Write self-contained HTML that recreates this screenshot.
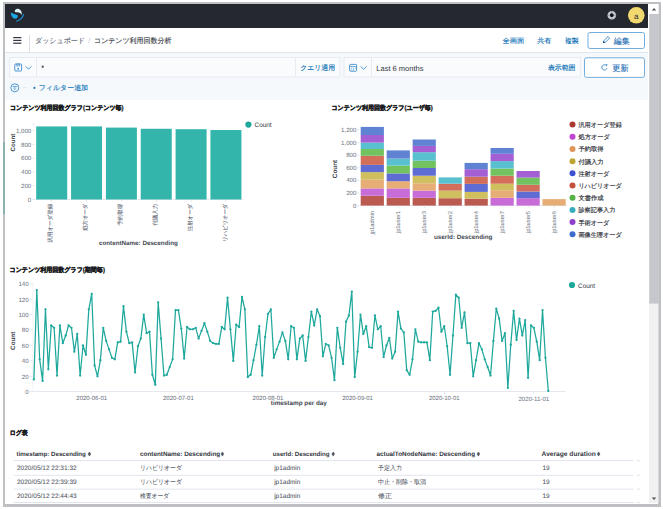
<!DOCTYPE html>
<html><head><meta charset="utf-8"><style>
html,body{margin:0;padding:0;width:663px;height:509px;overflow:hidden;background:#fff;}
svg{display:block;font-family:"Liberation Sans", sans-serif;text-rendering:geometricPrecision;}
</style></head><body>
<svg width="663" height="509" viewBox="0 0 663 509">
<rect x="0" y="0" width="663" height="509" fill="#ffffff"/>
<rect x="3" y="2" width="658" height="505" fill="#bfc0c3"/>
<rect x="5" y="4" width="653" height="500" fill="#ffffff"/>
<rect x="3" y="142" width="2" height="72" fill="#8fb0b0"/>
<rect x="5" y="4" width="643" height="24" fill="#25282f"/>
<path d="M14.8,11.8 C14.5,9.5 16.5,8.6 18,8.8 C20.5,9.2 22.2,11.5 21.7,14.9 C20.8,13.2 19.2,12.4 17.4,12.3 C16.2,12.2 15.2,12.3 14.8,11.8 Z" fill="#dcf3f7"/><path d="M10.8,12.4 C12.5,13.8 15.5,14 17.6,15.3 C18.3,16.6 17.5,18.7 15.5,18.7 C12.5,18.5 10.8,15.5 10.8,12.4 Z" fill="#1aa8e6"/><path d="M16.2,21.2 C19.5,20.5 22.8,17.8 23.7,14" stroke="#1b8fd6" stroke-width="1.1" fill="none"/>
<circle cx="611.8" cy="15.2" r="3.1" fill="#1a1c21" stroke="#c9cdd3" stroke-width="2.4"/>
<path d="M611.8,10.7 v2.2 M611.8,17.5 v2.2 M607.3,15.2 h2.2 M614.1,15.2 h2.2" stroke="#7d8590" stroke-width="0.8"/><circle cx="611.8" cy="15.2" r="1.4" fill="#111317"/>
<circle cx="636.3" cy="15.3" r="8.3" fill="#f1d86f"/>
<text x="636.30" y="16.40" font-size="8" fill="#25282f" font-weight="normal" text-anchor="middle" dominant-baseline="central">a</text>
<rect x="649" y="4" width="9.5" height="499" fill="#f1f1f1"/>
<rect x="649" y="4" width="9.5" height="10" fill="#ffffff"/>
<path d="M651.8,10.5 L654,8 L656.2,10.5 Z" fill="#505050"/>
<rect x="649.3" y="14" width="9.5" height="289.6" fill="#c5c7cc"/>
<path d="M651.8,497.5 L654,500 L656.2,497.5 Z" fill="#505050"/>
<rect x="5" y="52.3" width="643" height="0.9" fill="#d3dae6"/>
<rect x="13.2" y="37.0" width="8.2" height="1.2" fill="#343741"/>
<rect x="13.2" y="39.8" width="8.2" height="1.2" fill="#343741"/>
<rect x="13.2" y="42.6" width="8.2" height="1.2" fill="#343741"/>
<rect x="29" y="35" width="0.8" height="17.3" fill="#d3dae6"/>
<text x="35.00" y="41.10" font-size="7.1" fill="#69707d" font-weight="normal" text-anchor="start" dominant-baseline="central" stroke="#69707d" stroke-width="0.12" textLength="50" lengthAdjust="spacingAndGlyphs">ダッシュボード</text>
<text x="89.30" y="41.10" font-size="7.1" fill="#c5c9d0" font-weight="normal" text-anchor="middle" dominant-baseline="central">/</text>
<text x="94.00" y="41.10" font-size="7.1" fill="#343741" font-weight="normal" text-anchor="start" dominant-baseline="central" stroke="#343741" stroke-width="0.12" textLength="77.4" lengthAdjust="spacingAndGlyphs">コンテンツ利用回数分析</text>
<text x="502.40" y="41.30" font-size="6.8" fill="#006bb4" font-weight="normal" text-anchor="start" dominant-baseline="central" stroke="#006bb4" stroke-width="0.12" textLength="21.8" lengthAdjust="spacingAndGlyphs">全画面</text>
<text x="537.30" y="41.30" font-size="6.8" fill="#006bb4" font-weight="normal" text-anchor="start" dominant-baseline="central" stroke="#006bb4" stroke-width="0.12" textLength="14" lengthAdjust="spacingAndGlyphs">共有</text>
<text x="564.90" y="41.30" font-size="6.8" fill="#006bb4" font-weight="normal" text-anchor="start" dominant-baseline="central" stroke="#006bb4" stroke-width="0.12" textLength="13.8" lengthAdjust="spacingAndGlyphs">複製</text>
<rect x="588" y="32.5" width="56.5" height="16" rx="2" fill="#ffffff" stroke="#5b9fd6" stroke-width="0.85"/>
<path d="M603.4,42.6 L603.9,40.6 L608,36.5 L609.6,38.1 L605.5,42.2 Z" fill="none" stroke="#2f7fc4" stroke-width="0.85" stroke-linejoin="round"/><path d="M602.8,43.3 L603.5,40.9 L605.3,42.6 Z" fill="#0d4a85"/>
<text x="613.80" y="41.40" font-size="8.2" fill="#1f6fb5" font-weight="normal" text-anchor="start" dominant-baseline="central" stroke="#1f6fb5" stroke-width="0.12" textLength="15.8" lengthAdjust="spacingAndGlyphs">編集</text>
<rect x="5" y="53.2" width="643" height="46.8" fill="#f6f9fb"/>
<rect x="9.5" y="57.5" width="330.5" height="19.5" fill="#f9fbfc" stroke="#e4e8ef" stroke-width="0.8"/>
<rect x="36" y="57.5" width="0.8" height="19.5" fill="#e4e8ef"/>
<rect x="295" y="57.5" width="0.8" height="19.5" fill="#e4e8ef"/>
<rect x="14.8" y="64" width="6.8" height="7" rx="0.8" fill="none" stroke="#3a8bd0" stroke-width="0.9"/>
<rect x="16.8" y="64" width="2.8" height="2" fill="none" stroke="#3a8bd0" stroke-width="0.7"/>
<rect x="17.4" y="68" width="1.6" height="1.6" fill="#3a8bd0"/>
<path d="M25.8,66.4 L28.6,69.2 L31.4,66.4" fill="none" stroke="#3a8bd0" stroke-width="0.9"/>
<path d="M42.7,65.4 L42.7,68 M41.5,66.1 L43.9,67.3 M43.9,66.1 L41.5,67.3" stroke="#343741" stroke-width="0.6"/>
<text x="300.20" y="68.30" font-size="6.9" fill="#006bb4" font-weight="normal" text-anchor="start" dominant-baseline="central" stroke="#006bb4" stroke-width="0.12" textLength="34.9" lengthAdjust="spacingAndGlyphs">クエリ適用</text>
<rect x="344" y="57.5" width="236.3" height="19.5" fill="#f9fbfc" stroke="#e4e8ef" stroke-width="0.8"/>
<rect x="371.2" y="57.5" width="0.8" height="19.5" fill="#e4e8ef"/>
<rect x="349.6" y="64.4" width="7" height="6.8" rx="0.8" fill="none" stroke="#3a8bd0" stroke-width="0.9"/>
<rect x="349.6" y="66.1" width="7" height="0.7" fill="#3a8bd0"/>
<path d="M351.2,68.2 h1 M353,68.2 h1 M354.8,68.2 h1 M351.2,69.8 h1 M353,69.8 h1" stroke="#3a8bd0" stroke-width="0.7"/>
<path d="M360.6,66.4 L363.6,69.3 L366.6,66.4" fill="none" stroke="#3a8bd0" stroke-width="0.9"/>
<text x="376.30" y="68.30" font-size="7.5" fill="#343741" font-weight="normal" text-anchor="start" dominant-baseline="central">Last 6 months</text>
<text x="547.90" y="68.20" font-size="6.9" fill="#006bb4" font-weight="normal" text-anchor="start" dominant-baseline="central" stroke="#006bb4" stroke-width="0.12" textLength="27.5" lengthAdjust="spacingAndGlyphs">表示範囲</text>
<rect x="584.5" y="57.8" width="60" height="19.6" rx="2" fill="#ffffff" stroke="#5b9fd6" stroke-width="0.85"/>
<path d="M606.3,65.6 A2.6,2.6 0 1 0 606.9,68.2" fill="none" stroke="#3a8bd0" stroke-width="0.9"/>
<path d="M605.4,64.1 L607.6,64.4 L606.9,66.6 Z" fill="#3a8bd0"/>
<text x="612.30" y="68.40" font-size="8.4" fill="#1f6fb5" font-weight="normal" text-anchor="start" dominant-baseline="central" stroke="#1f6fb5" stroke-width="0.12" textLength="16.3" lengthAdjust="spacingAndGlyphs">更新</text>
<circle cx="14.8" cy="87.8" r="4" fill="none" stroke="#3a8bd0" stroke-width="0.9"/>
<path d="M12.6,86.5 L17,86.5 M13.3,88 L16.3,88 M14.1,89.4 L15.5,89.4" stroke="#3a8bd0" stroke-width="0.7"/>
<rect x="22.9" y="87.5" width="3.6" height="0.6" fill="#d3dae6"/>
<path d="M33.2,87.9 L35.6,87.9 M34.4,86.7 L34.4,89.1" stroke="#006bb4" stroke-width="0.8"/>
<text x="38.70" y="88.70" font-size="7.0" fill="#006bb4" font-weight="normal" text-anchor="start" dominant-baseline="central" stroke="#006bb4" stroke-width="0.12" textLength="49.4" lengthAdjust="spacingAndGlyphs">フィルター追加</text>
<text x="9.90" y="108.30" font-size="6.6" fill="#1a1c21" font-weight="bold" text-anchor="start" dominant-baseline="central" stroke="#1a1c21" stroke-width="0.3" textLength="113.7" lengthAdjust="spacingAndGlyphs">コンテンツ利用回数グラフ(コンテンツ毎)</text>
<text x="31.20" y="200.20" font-size="6.1" fill="#69707d" font-weight="normal" text-anchor="end" dominant-baseline="central">0</text>
<rect x="32.3" y="199.20" width="2.4" height="0.6" fill="#d3dae6"/>
<text x="31.20" y="186.44" font-size="6.1" fill="#69707d" font-weight="normal" text-anchor="end" dominant-baseline="central">200</text>
<rect x="32.3" y="185.44" width="2.4" height="0.6" fill="#d3dae6"/>
<text x="31.20" y="172.68" font-size="6.1" fill="#69707d" font-weight="normal" text-anchor="end" dominant-baseline="central">400</text>
<rect x="32.3" y="171.68" width="2.4" height="0.6" fill="#d3dae6"/>
<text x="31.20" y="158.92" font-size="6.1" fill="#69707d" font-weight="normal" text-anchor="end" dominant-baseline="central">600</text>
<rect x="32.3" y="157.92" width="2.4" height="0.6" fill="#d3dae6"/>
<text x="31.20" y="145.16" font-size="6.1" fill="#69707d" font-weight="normal" text-anchor="end" dominant-baseline="central">800</text>
<rect x="32.3" y="144.16" width="2.4" height="0.6" fill="#d3dae6"/>
<text x="31.20" y="131.40" font-size="6.1" fill="#69707d" font-weight="normal" text-anchor="end" dominant-baseline="central">1,000</text>
<rect x="32.3" y="130.40" width="2.4" height="0.6" fill="#d3dae6"/>
<rect x="32.3" y="123.6" width="2.4" height="0.6" fill="#d3dae6"/>
<rect x="34.5" y="199.3" width="208.5" height="0.6" fill="#d3dae6"/>
<text transform="translate(13.50,142.50) rotate(-90)" font-size="6.2" fill="#40444e" font-weight="bold" text-anchor="middle" dominant-baseline="central">Count</text>
<rect x="36.20" y="126.43" width="31" height="73.07" fill="#34b5ab"/>
<rect x="51.40" y="199.5" width="0.6" height="2.5" fill="#d3dae6"/>
<text transform="translate(51.40,203.80) rotate(-90)" font-size="5.6" fill="#69707d" font-weight="normal" text-anchor="end" dominant-baseline="central" stroke="#69707d" stroke-width="0.12" textLength="38.7" lengthAdjust="spacingAndGlyphs">汎用オーダ登録</text>
<rect x="71.05" y="126.43" width="31" height="73.07" fill="#34b5ab"/>
<rect x="86.25" y="199.5" width="0.6" height="2.5" fill="#d3dae6"/>
<text transform="translate(86.25,203.80) rotate(-90)" font-size="5.6" fill="#69707d" font-weight="normal" text-anchor="end" dominant-baseline="central" stroke="#69707d" stroke-width="0.12" textLength="27" lengthAdjust="spacingAndGlyphs">処方オーダ</text>
<rect x="105.90" y="127.60" width="31" height="71.90" fill="#34b5ab"/>
<rect x="121.10" y="199.5" width="0.6" height="2.5" fill="#d3dae6"/>
<text transform="translate(121.10,203.80) rotate(-90)" font-size="5.6" fill="#69707d" font-weight="normal" text-anchor="end" dominant-baseline="central" stroke="#69707d" stroke-width="0.12" textLength="21.8" lengthAdjust="spacingAndGlyphs">予約取得</text>
<rect x="140.75" y="128.77" width="31" height="70.73" fill="#34b5ab"/>
<rect x="155.95" y="199.5" width="0.6" height="2.5" fill="#d3dae6"/>
<text transform="translate(155.95,203.80) rotate(-90)" font-size="5.6" fill="#69707d" font-weight="normal" text-anchor="end" dominant-baseline="central" stroke="#69707d" stroke-width="0.12" textLength="21.8" lengthAdjust="spacingAndGlyphs">付議入力</text>
<rect x="175.60" y="129.19" width="31" height="70.31" fill="#34b5ab"/>
<rect x="190.80" y="199.5" width="0.6" height="2.5" fill="#d3dae6"/>
<text transform="translate(190.80,203.80) rotate(-90)" font-size="5.6" fill="#69707d" font-weight="normal" text-anchor="end" dominant-baseline="central" stroke="#69707d" stroke-width="0.12" textLength="27.5" lengthAdjust="spacingAndGlyphs">注射オーダ</text>
<rect x="210.45" y="130.01" width="31" height="69.49" fill="#34b5ab"/>
<rect x="225.65" y="199.5" width="0.6" height="2.5" fill="#d3dae6"/>
<text transform="translate(225.65,203.80) rotate(-90)" font-size="5.6" fill="#69707d" font-weight="normal" text-anchor="end" dominant-baseline="central" stroke="#69707d" stroke-width="0.12" textLength="38" lengthAdjust="spacingAndGlyphs">リハビリオーダ</text>
<text x="99.00" y="243.80" font-size="6.26" fill="#454953" font-weight="bold" text-anchor="start" dominant-baseline="central">contentName: Descending</text>
<circle cx="248.4" cy="124.6" r="3.1" fill="#1ea89c"/>
<text x="254.50" y="125.60" font-size="6.41" fill="#343741" font-weight="normal" text-anchor="start" dominant-baseline="central">Count</text>
<text x="331.40" y="108.00" font-size="6.6" fill="#1a1c21" font-weight="bold" text-anchor="start" dominant-baseline="central" stroke="#1a1c21" stroke-width="0.3" textLength="101.4" lengthAdjust="spacingAndGlyphs">コンテンツ利用回数グラフ(ユーザ毎)</text>
<text x="356.30" y="206.10" font-size="6.1" fill="#69707d" font-weight="normal" text-anchor="end" dominant-baseline="central">0</text>
<rect x="357" y="205.30" width="2.4" height="0.6" fill="#d3dae6"/>
<text x="356.30" y="193.50" font-size="6.1" fill="#69707d" font-weight="normal" text-anchor="end" dominant-baseline="central">200</text>
<rect x="357" y="192.70" width="2.4" height="0.6" fill="#d3dae6"/>
<text x="356.30" y="180.90" font-size="6.1" fill="#69707d" font-weight="normal" text-anchor="end" dominant-baseline="central">400</text>
<rect x="357" y="180.10" width="2.4" height="0.6" fill="#d3dae6"/>
<text x="356.30" y="168.30" font-size="6.1" fill="#69707d" font-weight="normal" text-anchor="end" dominant-baseline="central">600</text>
<rect x="357" y="167.50" width="2.4" height="0.6" fill="#d3dae6"/>
<text x="356.30" y="155.70" font-size="6.1" fill="#69707d" font-weight="normal" text-anchor="end" dominant-baseline="central">800</text>
<rect x="357" y="154.90" width="2.4" height="0.6" fill="#d3dae6"/>
<text x="356.30" y="143.10" font-size="6.1" fill="#69707d" font-weight="normal" text-anchor="end" dominant-baseline="central">1,000</text>
<rect x="357" y="142.30" width="2.4" height="0.6" fill="#d3dae6"/>
<text x="356.30" y="130.50" font-size="6.1" fill="#69707d" font-weight="normal" text-anchor="end" dominant-baseline="central">1,200</text>
<rect x="357" y="129.70" width="2.4" height="0.6" fill="#d3dae6"/>
<text transform="translate(335.60,169.00) rotate(-90)" font-size="6.41" fill="#40444e" font-weight="bold" text-anchor="middle" dominant-baseline="central">Count</text>
<rect x="359.5" y="205.3" width="208" height="0.6" fill="#d3dae6"/>
<rect x="360.70" y="195.70" width="23.2" height="9.90" fill="#bb5a50"/>
<rect x="360.70" y="188.40" width="23.2" height="7.30" fill="#c86cd7"/>
<rect x="360.70" y="179.70" width="23.2" height="8.70" fill="#e6ad76"/>
<rect x="360.70" y="172.10" width="23.2" height="7.60" fill="#cfbf5e"/>
<rect x="360.70" y="164.90" width="23.2" height="7.20" fill="#5e6cd3"/>
<rect x="360.70" y="155.80" width="23.2" height="9.10" fill="#d36e5b"/>
<rect x="360.70" y="149.00" width="23.2" height="6.80" fill="#72c35f"/>
<rect x="360.70" y="142.60" width="23.2" height="6.40" fill="#59c0cf"/>
<rect x="360.70" y="135.00" width="23.2" height="7.60" fill="#a35fd3"/>
<rect x="360.70" y="126.90" width="23.2" height="8.10" fill="#5f82d3"/>
<rect x="372.00" y="205.6" width="0.6" height="2.5" fill="#d3dae6"/>
<text transform="translate(373.20,210.90) rotate(-90)" font-size="5.8" fill="#69707d" font-weight="normal" text-anchor="end" dominant-baseline="central">jp1admin</text>
<rect x="386.67" y="197.80" width="23.2" height="7.80" fill="#bb5a50"/>
<rect x="386.67" y="188.40" width="23.2" height="9.40" fill="#c86cd7"/>
<rect x="386.67" y="181.20" width="23.2" height="7.20" fill="#e6ad76"/>
<rect x="386.67" y="173.40" width="23.2" height="7.80" fill="#5e6cd3"/>
<rect x="386.67" y="165.60" width="23.2" height="7.80" fill="#72c35f"/>
<rect x="386.67" y="158.60" width="23.2" height="7.00" fill="#59c0cf"/>
<rect x="386.67" y="150.40" width="23.2" height="8.20" fill="#5f82d3"/>
<rect x="397.97" y="205.6" width="0.6" height="2.5" fill="#d3dae6"/>
<text transform="translate(399.17,210.90) rotate(-90)" font-size="5.8" fill="#69707d" font-weight="normal" text-anchor="end" dominant-baseline="central">jp1user1</text>
<rect x="412.64" y="197.80" width="23.2" height="7.80" fill="#bb5a50"/>
<rect x="412.64" y="190.60" width="23.2" height="7.20" fill="#c86cd7"/>
<rect x="412.64" y="183.30" width="23.2" height="7.30" fill="#e6ad76"/>
<rect x="412.64" y="175.70" width="23.2" height="7.60" fill="#cfbf5e"/>
<rect x="412.64" y="168.00" width="23.2" height="7.70" fill="#5e6cd3"/>
<rect x="412.64" y="160.70" width="23.2" height="7.30" fill="#72c35f"/>
<rect x="412.64" y="152.20" width="23.2" height="8.50" fill="#59c0cf"/>
<rect x="412.64" y="145.90" width="23.2" height="6.30" fill="#a35fd3"/>
<rect x="412.64" y="139.50" width="23.2" height="6.40" fill="#5f82d3"/>
<rect x="423.94" y="205.6" width="0.6" height="2.5" fill="#d3dae6"/>
<text transform="translate(425.14,210.90) rotate(-90)" font-size="5.8" fill="#69707d" font-weight="normal" text-anchor="end" dominant-baseline="central">jp1user3</text>
<rect x="438.61" y="198.20" width="23.2" height="7.40" fill="#bb5a50"/>
<rect x="438.61" y="190.60" width="23.2" height="7.60" fill="#cfbf5e"/>
<rect x="438.61" y="183.70" width="23.2" height="6.90" fill="#d36e5b"/>
<rect x="438.61" y="177.40" width="23.2" height="6.30" fill="#59c0cf"/>
<rect x="449.91" y="205.6" width="0.6" height="2.5" fill="#d3dae6"/>
<text transform="translate(451.11,210.90) rotate(-90)" font-size="5.8" fill="#69707d" font-weight="normal" text-anchor="end" dominant-baseline="central">jp1user2</text>
<rect x="464.58" y="198.70" width="23.2" height="6.90" fill="#bb5a50"/>
<rect x="464.58" y="191.90" width="23.2" height="6.80" fill="#cfbf5e"/>
<rect x="464.58" y="183.90" width="23.2" height="8.00" fill="#5e6cd3"/>
<rect x="464.58" y="176.70" width="23.2" height="7.20" fill="#d36e5b"/>
<rect x="464.58" y="169.20" width="23.2" height="7.50" fill="#a35fd3"/>
<rect x="464.58" y="162.90" width="23.2" height="6.30" fill="#5f82d3"/>
<rect x="475.88" y="205.6" width="0.6" height="2.5" fill="#d3dae6"/>
<text transform="translate(477.08,210.90) rotate(-90)" font-size="5.8" fill="#69707d" font-weight="normal" text-anchor="end" dominant-baseline="central">jp1user4</text>
<rect x="490.55" y="197.80" width="23.2" height="7.80" fill="#c86cd7"/>
<rect x="490.55" y="190.20" width="23.2" height="7.60" fill="#e6ad76"/>
<rect x="490.55" y="183.70" width="23.2" height="6.50" fill="#cfbf5e"/>
<rect x="490.55" y="175.70" width="23.2" height="8.00" fill="#d36e5b"/>
<rect x="490.55" y="168.50" width="23.2" height="7.20" fill="#72c35f"/>
<rect x="490.55" y="161.10" width="23.2" height="7.40" fill="#59c0cf"/>
<rect x="490.55" y="153.80" width="23.2" height="7.30" fill="#a35fd3"/>
<rect x="490.55" y="148.00" width="23.2" height="5.80" fill="#5f82d3"/>
<rect x="501.85" y="205.6" width="0.6" height="2.5" fill="#d3dae6"/>
<text transform="translate(503.05,210.90) rotate(-90)" font-size="5.8" fill="#69707d" font-weight="normal" text-anchor="end" dominant-baseline="central">jp1user7</text>
<rect x="516.52" y="198.20" width="23.2" height="7.40" fill="#c86cd7"/>
<rect x="516.52" y="191.50" width="23.2" height="6.70" fill="#5e6cd3"/>
<rect x="516.52" y="184.80" width="23.2" height="6.70" fill="#d36e5b"/>
<rect x="516.52" y="177.60" width="23.2" height="7.20" fill="#72c35f"/>
<rect x="516.52" y="171.00" width="23.2" height="6.60" fill="#a35fd3"/>
<rect x="527.82" y="205.6" width="0.6" height="2.5" fill="#d3dae6"/>
<text transform="translate(529.02,210.90) rotate(-90)" font-size="5.8" fill="#69707d" font-weight="normal" text-anchor="end" dominant-baseline="central">jp1user5</text>
<rect x="542.49" y="199.10" width="23.2" height="6.50" fill="#e6ad76"/>
<rect x="553.79" y="205.6" width="0.6" height="2.5" fill="#d3dae6"/>
<text transform="translate(554.99,210.90) rotate(-90)" font-size="5.8" fill="#69707d" font-weight="normal" text-anchor="end" dominant-baseline="central">jp1user6</text>
<text x="434.00" y="237.50" font-size="6.3" fill="#454953" font-weight="bold" text-anchor="start" dominant-baseline="central">userId: Descending</text>
<circle cx="572.5" cy="124.60" r="3" fill="#ad3a30"/>
<text x="578.40" y="125.60" font-size="6.2" fill="#343741" font-weight="normal" text-anchor="start" dominant-baseline="central" stroke="#343741" stroke-width="0.18" textLength="43.4" lengthAdjust="spacingAndGlyphs">汎用オーダ登録</text>
<circle cx="572.5" cy="136.79" r="3" fill="#bf45d0"/>
<text x="578.40" y="137.79" font-size="6.2" fill="#343741" font-weight="normal" text-anchor="start" dominant-baseline="central" stroke="#343741" stroke-width="0.18" textLength="31.6" lengthAdjust="spacingAndGlyphs">処方オーダ</text>
<circle cx="572.5" cy="148.98" r="3" fill="#df9558"/>
<text x="578.40" y="149.98" font-size="6.2" fill="#343741" font-weight="normal" text-anchor="start" dominant-baseline="central" stroke="#343741" stroke-width="0.18" textLength="25.3" lengthAdjust="spacingAndGlyphs">予約取得</text>
<circle cx="572.5" cy="161.17" r="3" fill="#bea52e"/>
<text x="578.40" y="162.17" font-size="6.2" fill="#343741" font-weight="normal" text-anchor="start" dominant-baseline="central" stroke="#343741" stroke-width="0.18" textLength="25.3" lengthAdjust="spacingAndGlyphs">付議入力</text>
<circle cx="572.5" cy="173.36" r="3" fill="#3b50cf"/>
<text x="578.40" y="174.36" font-size="6.2" fill="#343741" font-weight="normal" text-anchor="start" dominant-baseline="central" stroke="#343741" stroke-width="0.18" textLength="31" lengthAdjust="spacingAndGlyphs">注射オーダ</text>
<circle cx="572.5" cy="185.55" r="3" fill="#c4503c"/>
<text x="578.40" y="186.55" font-size="6.2" fill="#343741" font-weight="normal" text-anchor="start" dominant-baseline="central" stroke="#343741" stroke-width="0.18" textLength="43.4" lengthAdjust="spacingAndGlyphs">リハビリオーダ</text>
<circle cx="572.5" cy="197.74" r="3" fill="#55b045"/>
<text x="578.40" y="198.74" font-size="6.2" fill="#343741" font-weight="normal" text-anchor="start" dominant-baseline="central" stroke="#343741" stroke-width="0.18" textLength="25.3" lengthAdjust="spacingAndGlyphs">文書作成</text>
<circle cx="572.5" cy="209.93" r="3" fill="#38adc0"/>
<text x="578.40" y="210.93" font-size="6.2" fill="#343741" font-weight="normal" text-anchor="start" dominant-baseline="central" stroke="#343741" stroke-width="0.18" textLength="37.1" lengthAdjust="spacingAndGlyphs">診察記事入力</text>
<circle cx="572.5" cy="222.12" r="3" fill="#9040c8"/>
<text x="578.40" y="223.12" font-size="6.2" fill="#343741" font-weight="normal" text-anchor="start" dominant-baseline="central" stroke="#343741" stroke-width="0.18" textLength="31" lengthAdjust="spacingAndGlyphs">手術オーダ</text>
<circle cx="572.5" cy="234.31" r="3" fill="#3d6ccc"/>
<text x="578.40" y="235.31" font-size="6.2" fill="#343741" font-weight="normal" text-anchor="start" dominant-baseline="central" stroke="#343741" stroke-width="0.18" textLength="43.4" lengthAdjust="spacingAndGlyphs">画像生理オーダ</text>
<text x="9.50" y="270.70" font-size="6.6" fill="#1a1c21" font-weight="bold" text-anchor="start" dominant-baseline="central" stroke="#1a1c21" stroke-width="0.3" textLength="95.4" lengthAdjust="spacingAndGlyphs">コンテンツ利用回数グラフ(期間毎)</text>
<text x="28.60" y="392.40" font-size="6.1" fill="#69707d" font-weight="normal" text-anchor="end" dominant-baseline="central">0</text>
<rect x="29.8" y="391.40" width="2.5" height="0.6" fill="#d3dae6"/>
<text x="28.60" y="377.00" font-size="6.1" fill="#69707d" font-weight="normal" text-anchor="end" dominant-baseline="central">20</text>
<rect x="29.8" y="376.00" width="2.5" height="0.6" fill="#d3dae6"/>
<text x="28.60" y="361.60" font-size="6.1" fill="#69707d" font-weight="normal" text-anchor="end" dominant-baseline="central">40</text>
<rect x="29.8" y="360.60" width="2.5" height="0.6" fill="#d3dae6"/>
<text x="28.60" y="346.20" font-size="6.1" fill="#69707d" font-weight="normal" text-anchor="end" dominant-baseline="central">60</text>
<rect x="29.8" y="345.20" width="2.5" height="0.6" fill="#d3dae6"/>
<text x="28.60" y="330.80" font-size="6.1" fill="#69707d" font-weight="normal" text-anchor="end" dominant-baseline="central">80</text>
<rect x="29.8" y="329.80" width="2.5" height="0.6" fill="#d3dae6"/>
<text x="28.60" y="315.40" font-size="6.1" fill="#69707d" font-weight="normal" text-anchor="end" dominant-baseline="central">100</text>
<rect x="29.8" y="314.40" width="2.5" height="0.6" fill="#d3dae6"/>
<text x="28.60" y="300.00" font-size="6.1" fill="#69707d" font-weight="normal" text-anchor="end" dominant-baseline="central">120</text>
<rect x="29.8" y="299.00" width="2.5" height="0.6" fill="#d3dae6"/>
<text x="28.60" y="284.60" font-size="6.1" fill="#69707d" font-weight="normal" text-anchor="end" dominant-baseline="central">140</text>
<rect x="29.8" y="283.60" width="2.5" height="0.6" fill="#d3dae6"/>
<rect x="32.6" y="282" width="0.6" height="110" fill="#e6e9ee"/>
<rect x="32.6" y="391.4" width="533" height="0.6" fill="#d3dae6"/>
<text transform="translate(13.50,340.80) rotate(-90)" font-size="6.3" fill="#40444e" font-weight="bold" text-anchor="middle" dominant-baseline="central">Count</text>
<rect x="91.40" y="391.7" width="0.6" height="2.5" fill="#d3dae6"/>
<text x="91.70" y="399.30" font-size="6.02" fill="#69707d" font-weight="normal" text-anchor="middle" dominant-baseline="central">2020-06-01</text>
<rect x="178.10" y="391.7" width="0.6" height="2.5" fill="#d3dae6"/>
<text x="178.40" y="399.30" font-size="6.02" fill="#69707d" font-weight="normal" text-anchor="middle" dominant-baseline="central">2020-07-01</text>
<rect x="267.69" y="391.7" width="0.6" height="2.5" fill="#d3dae6"/>
<text x="267.99" y="399.30" font-size="6.02" fill="#69707d" font-weight="normal" text-anchor="middle" dominant-baseline="central">2020-08-01</text>
<rect x="357.28" y="391.7" width="0.6" height="2.5" fill="#d3dae6"/>
<text x="357.58" y="399.30" font-size="6.02" fill="#69707d" font-weight="normal" text-anchor="middle" dominant-baseline="central">2020-09-01</text>
<rect x="443.98" y="391.7" width="0.6" height="2.5" fill="#d3dae6"/>
<text x="444.28" y="399.30" font-size="6.02" fill="#69707d" font-weight="normal" text-anchor="middle" dominant-baseline="central">2020-10-01</text>
<rect x="533.57" y="391.7" width="0.6" height="2.5" fill="#d3dae6"/>
<text x="533.87" y="399.30" font-size="6.11" fill="#69707d" font-weight="normal" text-anchor="middle" dominant-baseline="central">2020-11-01</text>
<polyline points="33.90,379.38 36.79,290.06 39.68,359.36 42.57,380.92 45.46,309.31 48.35,369.37 51.24,325.48 54.13,327.79 57.02,375.53 59.91,325.48 62.80,343.19 65.69,335.49 68.58,325.48 71.47,327.79 74.36,351.66 77.25,333.95 80.14,375.53 83.03,345.50 85.92,354.74 88.81,309.31 91.70,293.91 94.59,365.52 97.48,376.30 100.37,360.13 103.26,327.79 106.15,340.88 109.04,349.35 111.93,357.82 114.82,359.36 117.71,342.42 120.60,341.65 123.49,306.23 126.38,331.64 129.27,343.19 132.16,342.42 135.05,372.45 137.94,346.27 140.83,338.57 143.72,314.70 146.61,333.18 149.50,331.64 152.39,374.76 155.28,384.77 158.17,302.38 161.06,338.57 163.95,375.53 166.84,374.76 169.73,367.06 172.62,359.36 175.51,310.08 178.40,310.08 181.29,328.56 184.18,358.59 187.07,327.02 189.96,329.33 192.85,329.33 195.74,327.79 198.63,338.57 201.52,330.87 204.41,323.17 207.30,331.64 210.19,340.88 213.08,343.19 215.97,343.96 218.86,343.96 221.75,327.02 224.64,329.33 227.53,297.76 230.42,329.33 233.31,360.90 236.20,324.71 239.09,327.02 241.98,296.99 244.87,309.31 247.76,377.07 250.65,374.76 253.54,360.13 256.43,344.73 259.32,326.25 262.21,375.53 265.10,337.03 267.99,313.93 270.88,309.31 273.77,357.82 276.66,349.35 279.55,341.65 282.44,332.41 285.33,340.88 288.22,359.36 291.11,326.25 294.00,327.79 296.89,359.36 299.78,338.57 302.67,335.49 305.56,360.90 308.45,337.03 311.34,311.62 314.23,325.48 317.12,309.31 320.01,316.24 322.90,356.28 325.79,343.96 328.68,345.50 331.57,357.82 334.46,380.15 337.35,327.79 340.24,347.81 343.13,363.98 346.02,321.63 348.91,315.47 351.80,291.60 354.69,377.07 357.58,351.66 360.47,314.70 363.36,333.95 366.25,326.25 369.14,347.04 372.03,347.81 374.92,315.47 377.81,329.33 380.70,326.25 383.59,357.05 386.48,345.50 389.37,337.80 392.26,358.59 395.15,351.66 398.04,311.62 400.93,328.56 403.82,332.41 406.71,370.14 409.60,374.76 412.49,359.36 415.38,329.33 418.27,341.65 421.16,342.42 424.05,342.42 426.94,342.42 429.83,360.13 432.72,311.62 435.61,310.85 438.50,307.77 441.39,331.64 444.28,326.25 447.17,346.27 450.06,374.76 452.95,335.49 455.84,294.68 458.73,297.76 461.62,327.79 464.51,312.39 467.40,343.19 470.29,343.19 473.18,376.30 476.07,360.13 478.96,343.19 481.85,349.35 484.74,359.36 487.63,367.06 490.52,375.53 493.41,340.88 496.30,308.54 499.19,318.55 502.08,340.88 504.97,333.18 507.86,387.85 510.75,344.73 513.64,310.85 516.53,340.11 519.42,318.55 522.31,335.49 525.20,320.09 528.09,377.84 530.98,325.48 533.87,327.79 536.76,341.65 539.65,360.13 542.54,310.08 545.43,357.82 548.32,390.93" fill="none" stroke="#1ea89c" stroke-width="1.25" stroke-linejoin="round"/>
<circle cx="33.90" cy="379.38" r="1.15" fill="#1ea89c"/>
<circle cx="36.79" cy="290.06" r="1.15" fill="#1ea89c"/>
<circle cx="39.68" cy="359.36" r="1.15" fill="#1ea89c"/>
<circle cx="42.57" cy="380.92" r="1.15" fill="#1ea89c"/>
<circle cx="45.46" cy="309.31" r="1.15" fill="#1ea89c"/>
<circle cx="48.35" cy="369.37" r="1.15" fill="#1ea89c"/>
<circle cx="51.24" cy="325.48" r="1.15" fill="#1ea89c"/>
<circle cx="54.13" cy="327.79" r="1.15" fill="#1ea89c"/>
<circle cx="57.02" cy="375.53" r="1.15" fill="#1ea89c"/>
<circle cx="59.91" cy="325.48" r="1.15" fill="#1ea89c"/>
<circle cx="62.80" cy="343.19" r="1.15" fill="#1ea89c"/>
<circle cx="65.69" cy="335.49" r="1.15" fill="#1ea89c"/>
<circle cx="68.58" cy="325.48" r="1.15" fill="#1ea89c"/>
<circle cx="71.47" cy="327.79" r="1.15" fill="#1ea89c"/>
<circle cx="74.36" cy="351.66" r="1.15" fill="#1ea89c"/>
<circle cx="77.25" cy="333.95" r="1.15" fill="#1ea89c"/>
<circle cx="80.14" cy="375.53" r="1.15" fill="#1ea89c"/>
<circle cx="83.03" cy="345.50" r="1.15" fill="#1ea89c"/>
<circle cx="85.92" cy="354.74" r="1.15" fill="#1ea89c"/>
<circle cx="88.81" cy="309.31" r="1.15" fill="#1ea89c"/>
<circle cx="91.70" cy="293.91" r="1.15" fill="#1ea89c"/>
<circle cx="94.59" cy="365.52" r="1.15" fill="#1ea89c"/>
<circle cx="97.48" cy="376.30" r="1.15" fill="#1ea89c"/>
<circle cx="100.37" cy="360.13" r="1.15" fill="#1ea89c"/>
<circle cx="103.26" cy="327.79" r="1.15" fill="#1ea89c"/>
<circle cx="106.15" cy="340.88" r="1.15" fill="#1ea89c"/>
<circle cx="109.04" cy="349.35" r="1.15" fill="#1ea89c"/>
<circle cx="111.93" cy="357.82" r="1.15" fill="#1ea89c"/>
<circle cx="114.82" cy="359.36" r="1.15" fill="#1ea89c"/>
<circle cx="117.71" cy="342.42" r="1.15" fill="#1ea89c"/>
<circle cx="120.60" cy="341.65" r="1.15" fill="#1ea89c"/>
<circle cx="123.49" cy="306.23" r="1.15" fill="#1ea89c"/>
<circle cx="126.38" cy="331.64" r="1.15" fill="#1ea89c"/>
<circle cx="129.27" cy="343.19" r="1.15" fill="#1ea89c"/>
<circle cx="132.16" cy="342.42" r="1.15" fill="#1ea89c"/>
<circle cx="135.05" cy="372.45" r="1.15" fill="#1ea89c"/>
<circle cx="137.94" cy="346.27" r="1.15" fill="#1ea89c"/>
<circle cx="140.83" cy="338.57" r="1.15" fill="#1ea89c"/>
<circle cx="143.72" cy="314.70" r="1.15" fill="#1ea89c"/>
<circle cx="146.61" cy="333.18" r="1.15" fill="#1ea89c"/>
<circle cx="149.50" cy="331.64" r="1.15" fill="#1ea89c"/>
<circle cx="152.39" cy="374.76" r="1.15" fill="#1ea89c"/>
<circle cx="155.28" cy="384.77" r="1.15" fill="#1ea89c"/>
<circle cx="158.17" cy="302.38" r="1.15" fill="#1ea89c"/>
<circle cx="161.06" cy="338.57" r="1.15" fill="#1ea89c"/>
<circle cx="163.95" cy="375.53" r="1.15" fill="#1ea89c"/>
<circle cx="166.84" cy="374.76" r="1.15" fill="#1ea89c"/>
<circle cx="169.73" cy="367.06" r="1.15" fill="#1ea89c"/>
<circle cx="172.62" cy="359.36" r="1.15" fill="#1ea89c"/>
<circle cx="175.51" cy="310.08" r="1.15" fill="#1ea89c"/>
<circle cx="178.40" cy="310.08" r="1.15" fill="#1ea89c"/>
<circle cx="181.29" cy="328.56" r="1.15" fill="#1ea89c"/>
<circle cx="184.18" cy="358.59" r="1.15" fill="#1ea89c"/>
<circle cx="187.07" cy="327.02" r="1.15" fill="#1ea89c"/>
<circle cx="189.96" cy="329.33" r="1.15" fill="#1ea89c"/>
<circle cx="192.85" cy="329.33" r="1.15" fill="#1ea89c"/>
<circle cx="195.74" cy="327.79" r="1.15" fill="#1ea89c"/>
<circle cx="198.63" cy="338.57" r="1.15" fill="#1ea89c"/>
<circle cx="201.52" cy="330.87" r="1.15" fill="#1ea89c"/>
<circle cx="204.41" cy="323.17" r="1.15" fill="#1ea89c"/>
<circle cx="207.30" cy="331.64" r="1.15" fill="#1ea89c"/>
<circle cx="210.19" cy="340.88" r="1.15" fill="#1ea89c"/>
<circle cx="213.08" cy="343.19" r="1.15" fill="#1ea89c"/>
<circle cx="215.97" cy="343.96" r="1.15" fill="#1ea89c"/>
<circle cx="218.86" cy="343.96" r="1.15" fill="#1ea89c"/>
<circle cx="221.75" cy="327.02" r="1.15" fill="#1ea89c"/>
<circle cx="224.64" cy="329.33" r="1.15" fill="#1ea89c"/>
<circle cx="227.53" cy="297.76" r="1.15" fill="#1ea89c"/>
<circle cx="230.42" cy="329.33" r="1.15" fill="#1ea89c"/>
<circle cx="233.31" cy="360.90" r="1.15" fill="#1ea89c"/>
<circle cx="236.20" cy="324.71" r="1.15" fill="#1ea89c"/>
<circle cx="239.09" cy="327.02" r="1.15" fill="#1ea89c"/>
<circle cx="241.98" cy="296.99" r="1.15" fill="#1ea89c"/>
<circle cx="244.87" cy="309.31" r="1.15" fill="#1ea89c"/>
<circle cx="247.76" cy="377.07" r="1.15" fill="#1ea89c"/>
<circle cx="250.65" cy="374.76" r="1.15" fill="#1ea89c"/>
<circle cx="253.54" cy="360.13" r="1.15" fill="#1ea89c"/>
<circle cx="256.43" cy="344.73" r="1.15" fill="#1ea89c"/>
<circle cx="259.32" cy="326.25" r="1.15" fill="#1ea89c"/>
<circle cx="262.21" cy="375.53" r="1.15" fill="#1ea89c"/>
<circle cx="265.10" cy="337.03" r="1.15" fill="#1ea89c"/>
<circle cx="267.99" cy="313.93" r="1.15" fill="#1ea89c"/>
<circle cx="270.88" cy="309.31" r="1.15" fill="#1ea89c"/>
<circle cx="273.77" cy="357.82" r="1.15" fill="#1ea89c"/>
<circle cx="276.66" cy="349.35" r="1.15" fill="#1ea89c"/>
<circle cx="279.55" cy="341.65" r="1.15" fill="#1ea89c"/>
<circle cx="282.44" cy="332.41" r="1.15" fill="#1ea89c"/>
<circle cx="285.33" cy="340.88" r="1.15" fill="#1ea89c"/>
<circle cx="288.22" cy="359.36" r="1.15" fill="#1ea89c"/>
<circle cx="291.11" cy="326.25" r="1.15" fill="#1ea89c"/>
<circle cx="294.00" cy="327.79" r="1.15" fill="#1ea89c"/>
<circle cx="296.89" cy="359.36" r="1.15" fill="#1ea89c"/>
<circle cx="299.78" cy="338.57" r="1.15" fill="#1ea89c"/>
<circle cx="302.67" cy="335.49" r="1.15" fill="#1ea89c"/>
<circle cx="305.56" cy="360.90" r="1.15" fill="#1ea89c"/>
<circle cx="308.45" cy="337.03" r="1.15" fill="#1ea89c"/>
<circle cx="311.34" cy="311.62" r="1.15" fill="#1ea89c"/>
<circle cx="314.23" cy="325.48" r="1.15" fill="#1ea89c"/>
<circle cx="317.12" cy="309.31" r="1.15" fill="#1ea89c"/>
<circle cx="320.01" cy="316.24" r="1.15" fill="#1ea89c"/>
<circle cx="322.90" cy="356.28" r="1.15" fill="#1ea89c"/>
<circle cx="325.79" cy="343.96" r="1.15" fill="#1ea89c"/>
<circle cx="328.68" cy="345.50" r="1.15" fill="#1ea89c"/>
<circle cx="331.57" cy="357.82" r="1.15" fill="#1ea89c"/>
<circle cx="334.46" cy="380.15" r="1.15" fill="#1ea89c"/>
<circle cx="337.35" cy="327.79" r="1.15" fill="#1ea89c"/>
<circle cx="340.24" cy="347.81" r="1.15" fill="#1ea89c"/>
<circle cx="343.13" cy="363.98" r="1.15" fill="#1ea89c"/>
<circle cx="346.02" cy="321.63" r="1.15" fill="#1ea89c"/>
<circle cx="348.91" cy="315.47" r="1.15" fill="#1ea89c"/>
<circle cx="351.80" cy="291.60" r="1.15" fill="#1ea89c"/>
<circle cx="354.69" cy="377.07" r="1.15" fill="#1ea89c"/>
<circle cx="357.58" cy="351.66" r="1.15" fill="#1ea89c"/>
<circle cx="360.47" cy="314.70" r="1.15" fill="#1ea89c"/>
<circle cx="363.36" cy="333.95" r="1.15" fill="#1ea89c"/>
<circle cx="366.25" cy="326.25" r="1.15" fill="#1ea89c"/>
<circle cx="369.14" cy="347.04" r="1.15" fill="#1ea89c"/>
<circle cx="372.03" cy="347.81" r="1.15" fill="#1ea89c"/>
<circle cx="374.92" cy="315.47" r="1.15" fill="#1ea89c"/>
<circle cx="377.81" cy="329.33" r="1.15" fill="#1ea89c"/>
<circle cx="380.70" cy="326.25" r="1.15" fill="#1ea89c"/>
<circle cx="383.59" cy="357.05" r="1.15" fill="#1ea89c"/>
<circle cx="386.48" cy="345.50" r="1.15" fill="#1ea89c"/>
<circle cx="389.37" cy="337.80" r="1.15" fill="#1ea89c"/>
<circle cx="392.26" cy="358.59" r="1.15" fill="#1ea89c"/>
<circle cx="395.15" cy="351.66" r="1.15" fill="#1ea89c"/>
<circle cx="398.04" cy="311.62" r="1.15" fill="#1ea89c"/>
<circle cx="400.93" cy="328.56" r="1.15" fill="#1ea89c"/>
<circle cx="403.82" cy="332.41" r="1.15" fill="#1ea89c"/>
<circle cx="406.71" cy="370.14" r="1.15" fill="#1ea89c"/>
<circle cx="409.60" cy="374.76" r="1.15" fill="#1ea89c"/>
<circle cx="412.49" cy="359.36" r="1.15" fill="#1ea89c"/>
<circle cx="415.38" cy="329.33" r="1.15" fill="#1ea89c"/>
<circle cx="418.27" cy="341.65" r="1.15" fill="#1ea89c"/>
<circle cx="421.16" cy="342.42" r="1.15" fill="#1ea89c"/>
<circle cx="424.05" cy="342.42" r="1.15" fill="#1ea89c"/>
<circle cx="426.94" cy="342.42" r="1.15" fill="#1ea89c"/>
<circle cx="429.83" cy="360.13" r="1.15" fill="#1ea89c"/>
<circle cx="432.72" cy="311.62" r="1.15" fill="#1ea89c"/>
<circle cx="435.61" cy="310.85" r="1.15" fill="#1ea89c"/>
<circle cx="438.50" cy="307.77" r="1.15" fill="#1ea89c"/>
<circle cx="441.39" cy="331.64" r="1.15" fill="#1ea89c"/>
<circle cx="444.28" cy="326.25" r="1.15" fill="#1ea89c"/>
<circle cx="447.17" cy="346.27" r="1.15" fill="#1ea89c"/>
<circle cx="450.06" cy="374.76" r="1.15" fill="#1ea89c"/>
<circle cx="452.95" cy="335.49" r="1.15" fill="#1ea89c"/>
<circle cx="455.84" cy="294.68" r="1.15" fill="#1ea89c"/>
<circle cx="458.73" cy="297.76" r="1.15" fill="#1ea89c"/>
<circle cx="461.62" cy="327.79" r="1.15" fill="#1ea89c"/>
<circle cx="464.51" cy="312.39" r="1.15" fill="#1ea89c"/>
<circle cx="467.40" cy="343.19" r="1.15" fill="#1ea89c"/>
<circle cx="470.29" cy="343.19" r="1.15" fill="#1ea89c"/>
<circle cx="473.18" cy="376.30" r="1.15" fill="#1ea89c"/>
<circle cx="476.07" cy="360.13" r="1.15" fill="#1ea89c"/>
<circle cx="478.96" cy="343.19" r="1.15" fill="#1ea89c"/>
<circle cx="481.85" cy="349.35" r="1.15" fill="#1ea89c"/>
<circle cx="484.74" cy="359.36" r="1.15" fill="#1ea89c"/>
<circle cx="487.63" cy="367.06" r="1.15" fill="#1ea89c"/>
<circle cx="490.52" cy="375.53" r="1.15" fill="#1ea89c"/>
<circle cx="493.41" cy="340.88" r="1.15" fill="#1ea89c"/>
<circle cx="496.30" cy="308.54" r="1.15" fill="#1ea89c"/>
<circle cx="499.19" cy="318.55" r="1.15" fill="#1ea89c"/>
<circle cx="502.08" cy="340.88" r="1.15" fill="#1ea89c"/>
<circle cx="504.97" cy="333.18" r="1.15" fill="#1ea89c"/>
<circle cx="507.86" cy="387.85" r="1.15" fill="#1ea89c"/>
<circle cx="510.75" cy="344.73" r="1.15" fill="#1ea89c"/>
<circle cx="513.64" cy="310.85" r="1.15" fill="#1ea89c"/>
<circle cx="516.53" cy="340.11" r="1.15" fill="#1ea89c"/>
<circle cx="519.42" cy="318.55" r="1.15" fill="#1ea89c"/>
<circle cx="522.31" cy="335.49" r="1.15" fill="#1ea89c"/>
<circle cx="525.20" cy="320.09" r="1.15" fill="#1ea89c"/>
<circle cx="528.09" cy="377.84" r="1.15" fill="#1ea89c"/>
<circle cx="530.98" cy="325.48" r="1.15" fill="#1ea89c"/>
<circle cx="533.87" cy="327.79" r="1.15" fill="#1ea89c"/>
<circle cx="536.76" cy="341.65" r="1.15" fill="#1ea89c"/>
<circle cx="539.65" cy="360.13" r="1.15" fill="#1ea89c"/>
<circle cx="542.54" cy="310.08" r="1.15" fill="#1ea89c"/>
<circle cx="545.43" cy="357.82" r="1.15" fill="#1ea89c"/>
<circle cx="548.32" cy="390.93" r="1.15" fill="#1ea89c"/>
<text x="270.80" y="403.70" font-size="6.35" fill="#454953" font-weight="bold" text-anchor="start" dominant-baseline="central">timestamp per day</text>
<circle cx="572" cy="285" r="3.1" fill="#1ea89c"/>
<text x="578.00" y="286.00" font-size="6.41" fill="#343741" font-weight="normal" text-anchor="start" dominant-baseline="central">Count</text>
<text x="9.70" y="433.30" font-size="6.6" fill="#1a1c21" font-weight="bold" text-anchor="start" dominant-baseline="central" stroke="#1a1c21" stroke-width="0.3" textLength="18.1" lengthAdjust="spacingAndGlyphs">ログ表</text>
<text x="16.60" y="454.90" font-size="6.15" fill="#343741" font-weight="bold" text-anchor="start" dominant-baseline="central">timestamp: Descending</text>
<path d="M88.00,453.70 L89.40,451.90 L90.80,453.70 Z M88.00,454.30 L89.40,456.10 L90.80,454.30 Z" fill="#343741" stroke="#343741" stroke-width="0.3"/>
<text x="140.00" y="454.90" font-size="6.37" fill="#343741" font-weight="bold" text-anchor="start" dominant-baseline="central">contentName: Descending</text>
<path d="M221.00,453.70 L222.40,451.90 L223.80,453.70 Z M221.00,454.30 L222.40,456.10 L223.80,454.30 Z" fill="#343741" stroke="#343741" stroke-width="0.3"/>
<text x="272.80" y="454.90" font-size="6.11" fill="#343741" font-weight="bold" text-anchor="start" dominant-baseline="central">userId: Descending</text>
<path d="M331.80,453.70 L333.20,451.90 L334.60,453.70 Z M331.80,454.30 L333.20,456.10 L334.60,454.30 Z" fill="#343741" stroke="#343741" stroke-width="0.3"/>
<text x="376.50" y="454.90" font-size="6.35" fill="#343741" font-weight="bold" text-anchor="start" dominant-baseline="central">actualToNodeName: Descending</text>
<path d="M477.00,453.70 L478.40,451.90 L479.80,453.70 Z M477.00,454.30 L478.40,456.10 L479.80,454.30 Z" fill="#343741" stroke="#343741" stroke-width="0.3"/>
<text x="541.60" y="454.90" font-size="6.64" fill="#343741" font-weight="bold" text-anchor="start" dominant-baseline="central">Average duration</text>
<path d="M597.20,453.70 L598.60,451.90 L600.00,453.70 Z M597.20,454.30 L598.60,456.10 L600.00,454.30 Z" fill="#343741" stroke="#343741" stroke-width="0.3"/>
<text x="17.00" y="468.60" font-size="6.5" fill="#51565f" font-weight="normal" text-anchor="start" dominant-baseline="central" stroke="#51565f" stroke-width="0.06">2020/05/12 22:31:32</text>
<text x="140.00" y="468.60" font-size="6.4" fill="#51565f" font-weight="normal" text-anchor="start" dominant-baseline="central" stroke="#51565f" stroke-width="0.06" textLength="41.9" lengthAdjust="spacingAndGlyphs">リハビリオーダ</text>
<text x="274.20" y="468.60" font-size="6.46" fill="#51565f" font-weight="normal" text-anchor="start" dominant-baseline="central" stroke="#51565f" stroke-width="0.06">jp1admin</text>
<text x="378.00" y="468.60" font-size="6.4" fill="#51565f" font-weight="normal" text-anchor="start" dominant-baseline="central" stroke="#51565f" stroke-width="0.06" textLength="24" lengthAdjust="spacingAndGlyphs">予定入力</text>
<text x="542.40" y="468.60" font-size="6.4" fill="#51565f" font-weight="normal" text-anchor="start" dominant-baseline="central" stroke="#51565f" stroke-width="0.06">19</text>
<text x="17.00" y="482.60" font-size="6.5" fill="#51565f" font-weight="normal" text-anchor="start" dominant-baseline="central" stroke="#51565f" stroke-width="0.06">2020/05/12 22:39:39</text>
<text x="140.00" y="482.60" font-size="6.4" fill="#51565f" font-weight="normal" text-anchor="start" dominant-baseline="central" stroke="#51565f" stroke-width="0.06" textLength="41.9" lengthAdjust="spacingAndGlyphs">リハビリオーダ</text>
<text x="274.20" y="482.60" font-size="6.46" fill="#51565f" font-weight="normal" text-anchor="start" dominant-baseline="central" stroke="#51565f" stroke-width="0.06">jp1admin</text>
<text x="378.00" y="482.60" font-size="6.4" fill="#51565f" font-weight="normal" text-anchor="start" dominant-baseline="central" stroke="#51565f" stroke-width="0.06" textLength="48.1" lengthAdjust="spacingAndGlyphs">中止・削除・取消</text>
<text x="542.40" y="482.60" font-size="6.4" fill="#51565f" font-weight="normal" text-anchor="start" dominant-baseline="central" stroke="#51565f" stroke-width="0.06">19</text>
<text x="17.00" y="496.60" font-size="6.5" fill="#51565f" font-weight="normal" text-anchor="start" dominant-baseline="central" stroke="#51565f" stroke-width="0.06">2020/05/12 22:44:43</text>
<text x="140.00" y="496.60" font-size="6.4" fill="#51565f" font-weight="normal" text-anchor="start" dominant-baseline="central" stroke="#51565f" stroke-width="0.06" textLength="29.2" lengthAdjust="spacingAndGlyphs">検査オーダ</text>
<text x="274.20" y="496.60" font-size="6.46" fill="#51565f" font-weight="normal" text-anchor="start" dominant-baseline="central" stroke="#51565f" stroke-width="0.06">jp1admin</text>
<text x="378.00" y="496.60" font-size="6.4" fill="#51565f" font-weight="normal" text-anchor="start" dominant-baseline="central" stroke="#51565f" stroke-width="0.06" textLength="13.9" lengthAdjust="spacingAndGlyphs">修正</text>
<text x="542.40" y="496.60" font-size="6.4" fill="#51565f" font-weight="normal" text-anchor="start" dominant-baseline="central" stroke="#51565f" stroke-width="0.06">19</text>
<rect x="13.8" y="460.35" width="619.5" height="0.7" fill="#d3dae6"/>
<rect x="637" y="460.35" width="3" height="0.7" fill="#d3dae6"/>
<rect x="13.8" y="474.85" width="619.5" height="0.7" fill="#d3dae6"/>
<rect x="637" y="474.85" width="3" height="0.7" fill="#d3dae6"/>
<rect x="13.8" y="488.75" width="619.5" height="0.7" fill="#d3dae6"/>
<rect x="637" y="488.75" width="3" height="0.7" fill="#d3dae6"/>
<rect x="13.8" y="502.05" width="619.5" height="0.7" fill="#d3dae6"/>
<rect x="637" y="502.05" width="3" height="0.7" fill="#d3dae6"/>
</svg>
</body></html>
